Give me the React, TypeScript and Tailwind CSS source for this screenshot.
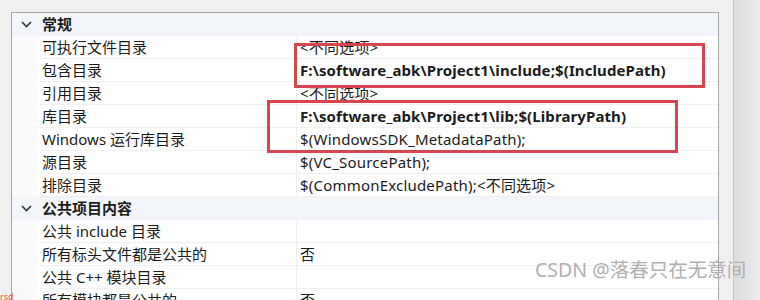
import React from 'react';

type Row =
  | { kind: 'group'; label: string }
  | { kind: 'prop'; label: string; value?: string; bold?: boolean; pre?: string };

const rows: Row[] = [
  { kind: 'group', label: '常规' },
  { kind: 'prop', label: '可执行文件目录', value: '<不同选项>' },
  { kind: 'prop', label: '包含目录', value: 'F:\\software_abk\\Project1\\include;$(IncludePath)', bold: true },
  { kind: 'prop', label: '引用目录', value: '<不同选项>' },
  { kind: 'prop', label: '库目录', value: 'F:\\software_abk\\Project1\\lib;$(LibraryPath)', bold: true },
  { kind: 'prop', label: 'Windows 运行库目录', value: '$(WindowsSDK_MetadataPath);' },
  { kind: 'prop', label: '源目录', value: '$(VC_SourcePath);' },
  { kind: 'prop', label: '排除目录', value: '$(CommonExcludePath);<不同选项>' },
  { kind: 'group', label: '公共项目内容' },
  { kind: 'prop', label: '公共 include 目录' },
  { kind: 'prop', label: '所有标头文件都是公共的', value: '否' },
  { kind: 'prop', label: '公共 C++ 模块目录' },
  { kind: 'prop', label: '所有模块都是公共的', value: '否' },
];

function Chevron() {
  return (
    <svg width="11" height="7" viewBox="0 0 11 7" className="block">
      <path d="M1 1 L5.5 5.5 L10 1" fill="none" stroke="#333" strokeWidth="1.6" />
    </svg>
  );
}

export default function App() {
  return (
    <div
      className="relative flex h-[300px] w-[760px] overflow-hidden bg-[#f0f0f0] text-[15px] text-[#1b1b1b]"
      style={{ fontFamily: '"Noto Sans", "Noto Sans CJK SC", sans-serif' }}
    >
      <div className="w-[11px] shrink-0" />

      {/* property grid */}
      <div className="mt-[12px] w-[708px] shrink-0 border-l border-r border-t border-[#a8a8a8] bg-white">
        {rows.map((row, i) =>
          row.kind === 'group' ? (
            <div key={i} className="flex h-[23px] items-center bg-[#f2f5f9]">
              <div className="flex w-[26px] justify-center pl-[2px]">
                <Chevron />
              </div>
              <span className="pl-[4px] font-bold">{row.label}</span>
            </div>
          ) : (
            <div key={i} className="flex h-[23px] bg-[#fafafa]">
              <div className="w-[26px] shrink-0" />
              <div className="flex flex-1 border-b border-[#f0f0f0] bg-white">
                <div className="flex w-[258px] shrink-0 items-center pl-[4px] whitespace-nowrap">{row.label}</div>
                <div
                  className={`flex flex-1 items-center border-l border-[#f0f0f0] pl-[3px] whitespace-nowrap ${
                    row.bold ? 'font-bold tracking-[0.1px]' : 'tracking-[0.2px]'
                  }`}
                >
                  {row.value}
                </div>
              </div>
            </div>
          ),
        )}
      </div>

      <div className="w-[14px] shrink-0" />

      {/* scrollbar / side strip */}
      <div className="flex-1 border-l border-[#c8c8c8] bg-gradient-to-r from-[#dcdcdc] to-[#ececec]" />

      {/* annotation boxes */}
      <div className="pointer-events-none absolute left-[294px] top-[43px] h-[45px] w-[411px] border-[3px] border-[#d6464f]" />
      <div className="pointer-events-none absolute left-[267px] top-[100px] h-[53px] w-[411px] border-[3px] border-[#d6464f]" />

      {/* watermark */}
      <div className="pointer-events-none absolute left-[535px] top-[255px] text-[19.5px] whitespace-nowrap text-[#b0b0b0]">
        CSDN @落春只在无意间
      </div>
      <div className="absolute bottom-[-3px] left-0 text-[9px] text-[#e0603a]">rsd</div>
    </div>
  );
}
